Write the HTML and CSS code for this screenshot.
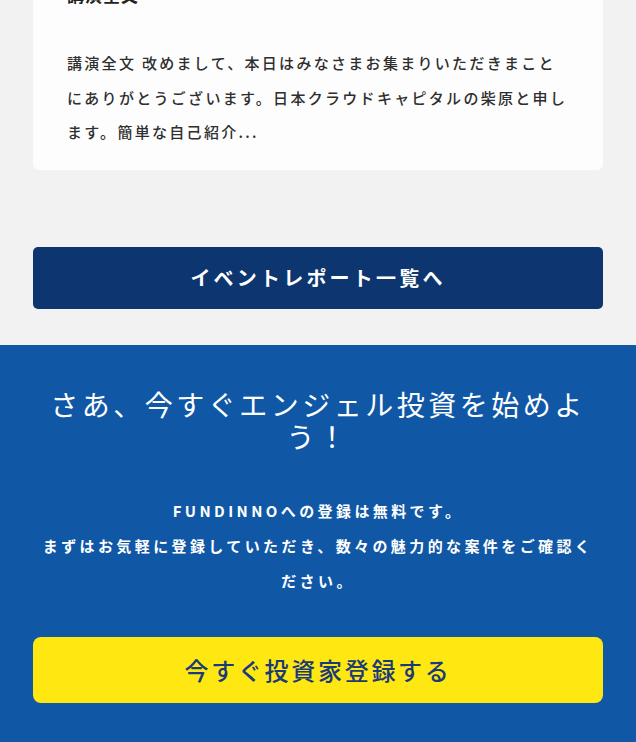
FILE: index.html
```html
<!DOCTYPE html>
<html lang="ja">
<head>
<meta charset="utf-8">
<title>FUNDINNO</title>
<link rel="stylesheet" href="styles.css">
</head>
<body>
<div class="page">
  <section class="report">
    <article class="card">
      <h3 class="card-title">講演全文</h3>
      <p class="card-text">講演全文 改めまして、本日はみなさまお集まりいただきまことにありがとうございます。日本クラウドキャピタルの柴原と申します。簡単な自己紹介...</p>
    </article>
    <a class="btn-list" href="#">イベントレポート一覧へ</a>
  </section>
  <section class="cta">
    <h2 class="cta-title">さあ、今すぐエンジェル投資を始めよう！</h2>
    <p class="cta-text">FUNDINNOへの登録は無料です。<br>まずはお気軽に登録していただき、数々の魅力的な案件をご確認ください。</p>
    <a class="btn-register" href="#">今すぐ投資家登録する</a>
  </section>
</div>
</body>
</html>
```
FILE: styles.css
```css
* { box-sizing: border-box; }
html, body { margin: 0; padding: 0; }
body {
  background: #f2f2f2;
  font-family: "Noto Sans CJK JP", "Noto Sans", sans-serif;
  color: #333;
  overflow: hidden;
}
.page { margin-top: -17px; }
.report {
  padding: 0 33px 36px;
  display: flex;
  flex-direction: column;
}
.card {
  background: #fdfdfd;
  border-radius: 0 0 6px 6px;
  padding: 0 34px 20px;
}
.card-title {
  margin: 0;
  font-size: 17px;
  line-height: 24px;
  font-weight: 700;
  letter-spacing: 1px;
  color: #222;
}
.card-text {
  margin: 39px 0 0;
  font-size: 15px;
  line-height: 34.5px;
  letter-spacing: 2.3px;
  font-weight: 500;
  color: #2e2e2e;
}
.btn-list {
  margin-top: 77px;
  height: 62px;
  display: flex;
  align-items: center;
  justify-content: center;
  background: #0d3570;
  border-radius: 5px;
  color: #fff;
  font-size: 20px;
  font-weight: 700;
  letter-spacing: 3.2px;
  text-decoration: none;
}
.cta {
  background: #1058a6;
  padding: 43px 33px 39px;
  display: flex;
  flex-direction: column;
  align-items: stretch;
  text-align: center;
  color: #fff;
}
.cta-title {
  margin: 0;
  padding: 0 10px;
  font-size: 28px;
  line-height: 32px;
  font-weight: 400;
  letter-spacing: 3.5px;
}
.cta-text {
  margin: 41px 0 0;
  padding: 0 2px;
  font-size: 15px;
  line-height: 35px;
  font-weight: 700;
  letter-spacing: 3.4px;
}
.btn-register {
  margin-top: 39px;
  height: 66px;
  display: flex;
  align-items: center;
  justify-content: center;
  background: #ffe812;
  border-radius: 8px;
  color: #1b3a78;
  font-size: 24px;
  font-weight: 500;
  letter-spacing: 2.7px;
  text-decoration: none;
}
```
